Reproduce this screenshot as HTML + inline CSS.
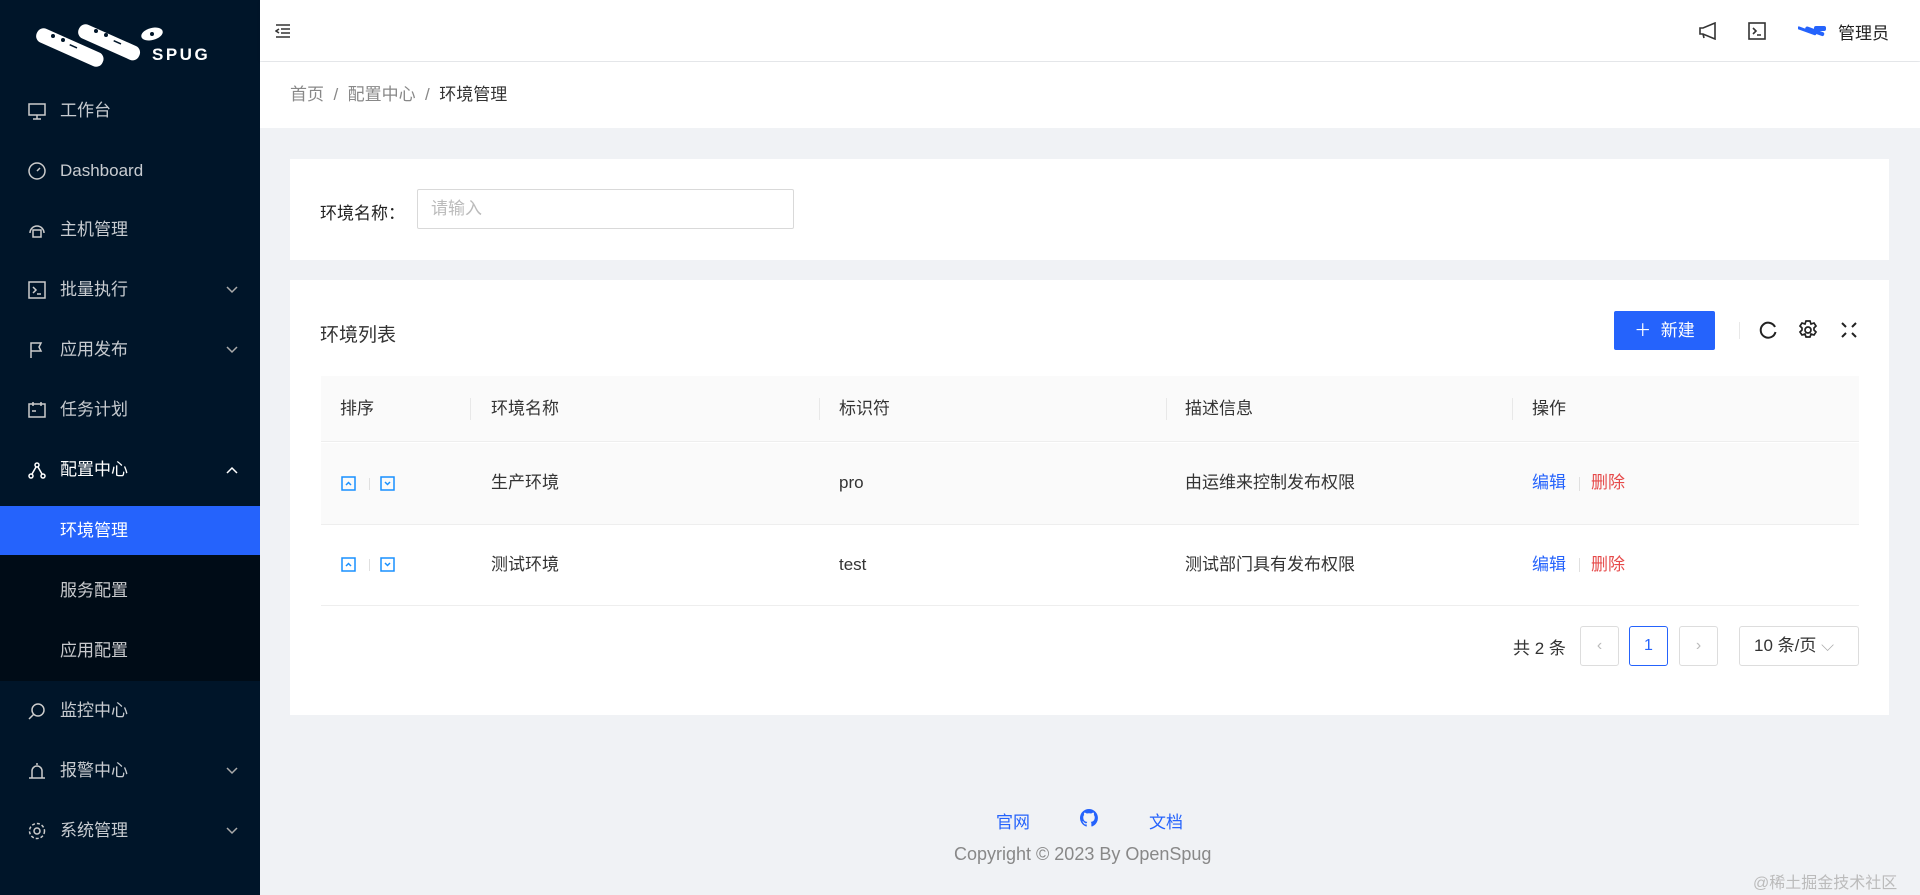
<!DOCTYPE html>
<html><head><meta charset="utf-8"><style>
*{box-sizing:border-box;margin:0;padding:0}
body{width:1920px;height:895px;overflow:hidden;background:#f0f2f5;font-family:"Liberation Sans","Noto Sans CJK SC",sans-serif;color:#333;position:relative}
.side{position:absolute;left:0;top:0;width:260px;height:895px;background:#001529}
.logo{position:absolute;left:34px;top:18px}
.mi{position:absolute;left:0;width:260px;height:60px;color:rgba(255,255,255,.78);font-size:17px;line-height:60px;padding-left:60px}
.mi svg{position:absolute;left:28px;top:21px}
.mi .ar{position:absolute;left:auto;right:22px;top:26px}
.sub{position:absolute;left:0;top:555px;width:260px;height:126px;background:#000c17}
.sel{background:#2563fc;color:#fff;height:50px;line-height:50px}
.hdr{position:absolute;left:260px;top:0;width:1660px;height:61px;background:#fff;box-shadow:0 1px 3px rgba(0,0,0,.08)}
.bc{position:absolute;left:260px;top:62px;width:1660px;height:66px;background:#fff;font-size:17px;line-height:66px;padding-left:30px;color:#888}
.bc b{font-weight:normal;color:#333}
.card{position:absolute;background:#fff;left:290px;width:1599px}
.abs{position:absolute}
.th{position:absolute;left:321px;top:376px;width:1538px;height:66px;background:#fafafa;border-bottom:1px solid #eee;font-size:17px;line-height:66px}
.row{position:absolute;left:321px;width:1538px;border-bottom:1px solid #eee;font-size:17px}
.row span{position:absolute;top:0;line-height:inherit}
.sep{position:absolute;top:22px;width:1px;height:22px;background:#e8e8e8}
.pg{position:absolute;top:626px;height:40px;border:1px solid #ddd;border-radius:3px;background:#fff;text-align:center;line-height:38px;font-size:16px;color:#bbb}
.ud{position:absolute;width:15px;height:15px}
</style></head><body>
<div class="side">
 <svg class="logo" width="200" height="50" viewBox="0 0 200 50">
  <g fill="#fff"><rect x="6" y="8" width="72" height="15" rx="7" transform="rotate(24 6 8)"/><rect x="48" y="4" width="66" height="15" rx="7" transform="rotate(24 48 4)"/><ellipse cx="118" cy="16" rx="11" ry="6" transform="rotate(-15 118 16)"/></g>
  <g fill="#001529"><circle cx="19" cy="18" r="2"/><circle cx="29" cy="22" r="2"/><circle cx="62" cy="13" r="2"/><circle cx="72" cy="17" r="2"/><circle cx="118" cy="16" r="2"/><rect x="36" y="26" width="8" height="1.5" transform="rotate(24 36 26)"/><rect x="80" y="22" width="8" height="1.5" transform="rotate(24 80 22)"/></g>
  <text x="118" y="42" fill="#fff" font-size="17" font-weight="bold" font-family="Liberation Sans" letter-spacing="2.5">SPUG</text>
 </svg>
 <div class="mi" style="top:81px"><svg width="18" height="18" fill="none" stroke="#ccc" stroke-width="1.5"><rect x="1" y="2" width="16" height="11"/><path d="M9 13v4M5 17h8"/></svg>工作台</div>
 <div class="mi" style="top:141px"><svg width="18" height="18" fill="none" stroke="#ccc" stroke-width="1.5"><circle cx="9" cy="9" r="8"/><path d="M9 9l3-3"/></svg>Dashboard</div>
 <div class="mi" style="top:200px"><svg width="18" height="18" fill="none" stroke="#ccc" stroke-width="1.5"><path d="M2 12a7 7 0 0 1 14 0"/><rect x="5" y="9" width="8" height="7"/></svg>主机管理</div>
 <div class="mi" style="top:260px"><svg width="18" height="18" fill="none" stroke="#ccc" stroke-width="1.5"><rect x="1" y="1" width="16" height="16"/><path d="M5 6l3 3-3 3M9 13h4"/></svg>批量执行<svg class="ar" width="12" height="8" fill="none" stroke="#aaa" stroke-width="1.5"><path d="M1 1l5 5 5-5"/></svg></div>
 <div class="mi" style="top:320px"><svg width="18" height="18" fill="none" stroke="#ccc" stroke-width="1.5"><path d="M3 17V2h10l-2 4 2 4H3"/></svg>应用发布<svg class="ar" width="12" height="8" fill="none" stroke="#aaa" stroke-width="1.5"><path d="M1 1l5 5 5-5"/></svg></div>
 <div class="mi" style="top:380px"><svg width="18" height="18" fill="none" stroke="#ccc" stroke-width="1.5"><rect x="1" y="3" width="16" height="13"/><path d="M5 1v4M13 1v4M4 10h4"/></svg>任务计划</div>
 <div class="mi" style="top:440px;color:#fff"><svg width="18" height="18" fill="none" stroke="#fff" stroke-width="1.5"><circle cx="9" cy="4" r="2"/><circle cx="3" cy="15" r="2"/><circle cx="15" cy="15" r="2"/><path d="M8 6l-4 7M10 6l4 7"/></svg>配置中心<svg class="ar" width="12" height="8" fill="none" stroke="#fff" stroke-width="1.5"><path d="M1 7l5-5 5 5"/></svg></div>
 <div class="mi sel" style="top:506px">环境管理</div>
 <div class="sub"></div>
 <div class="mi" style="top:561px">服务配置</div>
 <div class="mi" style="top:621px">应用配置</div>
 <div class="mi" style="top:681px"><svg width="18" height="18" fill="none" stroke="#ccc" stroke-width="1.5"><circle cx="10" cy="8" r="6"/><path d="M6 12l-5 5"/></svg>监控中心</div>
 <div class="mi" style="top:741px"><svg width="18" height="18" fill="none" stroke="#ccc" stroke-width="1.5"><path d="M4 16V9a5 5 0 0 1 10 0v7M1 16h16M9 1v2"/></svg>报警中心<svg class="ar" width="12" height="8" fill="none" stroke="#aaa" stroke-width="1.5"><path d="M1 1l5 5 5-5"/></svg></div>
 <div class="mi" style="top:801px"><svg width="18" height="18" fill="none" stroke="#ccc" stroke-width="1.5"><circle cx="9" cy="9" r="3"/><circle cx="9" cy="9" r="7.5" stroke-dasharray="3 2"/></svg>系统管理<svg class="ar" width="12" height="8" fill="none" stroke="#aaa" stroke-width="1.5"><path d="M1 1l5 5 5-5"/></svg></div>
</div>
<div class="hdr">
 <svg class="abs" style="left:15px;top:24px" width="16" height="14" fill="none" stroke="#333" stroke-width="1.6"><path d="M1 1h14M6 5h9M6 9h9M1 13h14M4 5L1 7l3 2"/></svg>
 <svg class="abs" style="left:1438px;top:22px" width="20" height="18" fill="none" stroke="#333" stroke-width="1.6"><path d="M2 6h3l12-5v16L5 12H2zM5 12l1 4"/></svg>
 <svg class="abs" style="left:1488px;top:22px" width="18" height="18" fill="none" stroke="#333" stroke-width="1.6"><rect x="1" y="1" width="16" height="16"/><path d="M5 6l3 3-3 3M9 13h4"/></svg>
 <svg class="abs" style="left:1538px;top:24px" width="30" height="14"><g fill="#2563fc"><rect x="0" y="2" width="20" height="3" rx="1.5" transform="rotate(20 0 2)"/><rect x="8" y="2" width="20" height="4" rx="2" transform="rotate(20 8 2)"/><rect x="16" y="2" width="12" height="5" rx="2"/></g></svg>
 <div class="abs" style="left:1578px;top:19px;font-size:17px;color:#222">管理员</div>
</div>
<div class="bc">首页 &nbsp;/&nbsp; 配置中心 &nbsp;/&nbsp; <b>环境管理</b></div>
<div class="card" style="top:159px;height:101px">
 <div class="abs" style="left:30px;top:40px;font-size:17px;color:#222">环境名称：</div>
 <div class="abs" style="left:127px;top:30px;width:377px;height:40px;border:1px solid #d9d9d9;border-radius:2px;font-size:17px;color:#bbb;line-height:38px;padding-left:13px">请输入</div>
</div>
<div class="card" style="top:280px;height:435px">
 <div class="abs" style="left:30px;top:40px;font-size:19px;color:#333">环境列表</div>
 <div class="abs" style="left:1324px;top:31px;width:101px;height:39px;background:#2563fc;border-radius:2px;color:#fff;font-size:17px;line-height:39px;text-align:center">＋ &nbsp;新建</div>
 <div class="abs" style="left:1449px;top:42px;width:1px;height:17px;background:#e8e8e8"></div>
 <svg class="abs" style="left:1468px;top:40px" width="20" height="20" fill="none" stroke="#222" stroke-width="2"><path d="M17 7A7.5 7.5 0 1 0 17.5 12"/></svg>
 <svg class="abs" style="left:1508px;top:40px" width="20" height="20" fill="none" stroke="#222" stroke-width="1.7"><circle cx="10" cy="10" r="3"/><path d="M8 1h4l1 3 3-1 2 3-2 2 0 2 2 2-2 3-3-1-1 3H8l-1-3-3 1-2-3 2-2V8L2 6l2-3 3 1z"/></svg>
 <svg class="abs" style="left:1550px;top:41px" width="18" height="18" fill="none" stroke="#222" stroke-width="2"><path d="M2 2l4 4M16 2l-4 4M2 16l4-4M16 16l-4-4"/></svg>
</div>
<div class="th">
 <span class="abs" style="left:19px">排序</span><div class="sep" style="left:149px"></div>
 <span class="abs" style="left:170px">环境名称</span><div class="sep" style="left:498px"></div>
 <span class="abs" style="left:518px">标识符</span><div class="sep" style="left:845px"></div>
 <span class="abs" style="left:864px">描述信息</span><div class="sep" style="left:1191px"></div>
 <span class="abs" style="left:1211px">操作</span>
</div>
<div class="row" style="top:443px;height:82px;line-height:80px;background:#fafafa">
 <svg class="ud" style="left:20px;top:33px" viewBox="0 0 15 15" fill="none" stroke="#1890ff" stroke-width="1.5"><rect x="1" y="1" width="13" height="13"/><path d="M5 9l2.5-2.5L10 9"/></svg>
 <div class="abs" style="left:48px;top:35px;width:1px;height:12px;background:#e0e0e0"></div>
 <svg class="ud" style="left:59px;top:33px" viewBox="0 0 15 15" fill="none" stroke="#1890ff" stroke-width="1.5"><rect x="1" y="1" width="13" height="13"/><path d="M5 6l2.5 2.5L10 6"/></svg>
 <span style="left:170px">生产环境</span><span style="left:518px">pro</span><span style="left:864px">由运维来控制发布权限</span>
 <span style="left:1211px;color:#2563fc">编辑</span><div class="abs" style="left:1258px;top:34px;width:1px;height:14px;background:#e0e0e0"></div><span style="left:1270px;color:#e64a4a">删除</span>
</div>
<div class="row" style="top:525px;height:81px;line-height:80px">
 <svg class="ud" style="left:20px;top:32px" viewBox="0 0 15 15" fill="none" stroke="#1890ff" stroke-width="1.5"><rect x="1" y="1" width="13" height="13"/><path d="M5 9l2.5-2.5L10 9"/></svg>
 <div class="abs" style="left:48px;top:34px;width:1px;height:12px;background:#e0e0e0"></div>
 <svg class="ud" style="left:59px;top:32px" viewBox="0 0 15 15" fill="none" stroke="#1890ff" stroke-width="1.5"><rect x="1" y="1" width="13" height="13"/><path d="M5 6l2.5 2.5L10 6"/></svg>
 <span style="left:170px">测试环境</span><span style="left:518px">test</span><span style="left:864px">测试部门具有发布权限</span>
 <span style="left:1211px;color:#2563fc">编辑</span><div class="abs" style="left:1258px;top:33px;width:1px;height:14px;background:#e0e0e0"></div><span style="left:1270px;color:#e64a4a">删除</span>
</div>
<div class="abs" style="left:1513px;top:634px;font-size:17px">共 2 条</div>
<div class="pg" style="left:1580px;width:39px">‹</div>
<div class="pg" style="left:1629px;width:39px;border-color:#2563fc;color:#2563fc">1</div>
<div class="pg" style="left:1679px;width:39px">›</div>
<div class="pg" style="left:1739px;width:120px;color:#333;text-align:left;padding-left:14px;font-size:17px">10 条/页 <span style="color:#aaa">⌵</span></div>
<div class="abs" style="left:996px;top:808px;font-size:17px;color:#2563fc">官网</div>
<svg class="abs" style="left:1080px;top:809px" width="18" height="18" viewBox="0 0 16 16"><path fill="#2563fc" d="M8 0a8 8 0 0 0-2.5 15.6c.4 0 .5-.2.5-.4v-1.5c-2.2.5-2.7-1-2.7-1-.4-.9-.9-1.2-.9-1.200-.7-.5.1-.5.1-.5.8.1 1.2.8 1.2.8.7 1.3 1.9.9 2.3.7.1-.5.3-.9.5-1.1-1.8-.2-3.6-.9-3.6-4 0-.9.3-1.6.8-2.1-.1-.2-.4-1 .1-2.1 0 0 .7-.2 2.2.8a7.5 7.5 0 0 1 4 0c1.5-1 2.2-.8 2.2-.8.4 1.1.2 1.9.1 2.1.5.6.8 1.3.8 2.1 0 3.1-1.900 3.8-3.6 4 .3.3.6.8.6 1.5v2.2c0 .2.1.5.6.4A8 8 0 0 0 8 0z"/></svg>
<div class="abs" style="left:1149px;top:808px;font-size:17px;color:#2563fc">文档</div>
<div class="abs" style="left:954px;top:844px;font-size:18px;color:#888">Copyright © 2023 By OpenSpug</div>
<div class="abs" style="left:1753px;top:869px;font-size:16px;color:#bbb">@稀土掘金技术社区</div>
</body></html>
